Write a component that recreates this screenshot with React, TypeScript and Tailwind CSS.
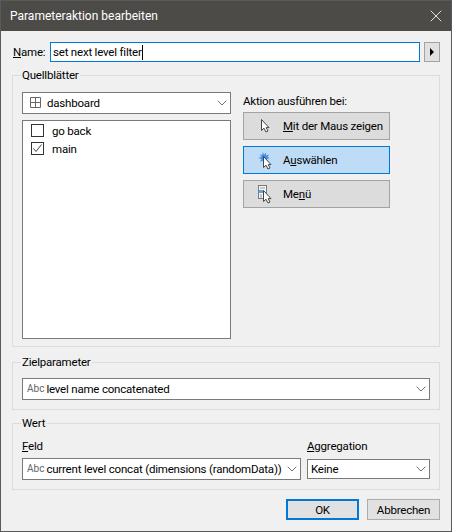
import React from 'react';
import { X, ChevronDown } from 'lucide-react';

const font = { fontFamily: 'Roboto, "Noto Sans", sans-serif' };

function Cursor({ x = 0, y = 0 }: { x?: number; y?: number }) {
  return (
    <path
      transform={`translate(${x} ${y})`}
      d="M0.5 0.5 V11.5 L3 9.2 L5 13 L7 12 L5.2 8.6 H8 Z"
      fill="#fff"
      stroke="#444"
      strokeWidth="1"
    />
  );
}

function HoverIcon() {
  return (
    <svg width="20" height="20" viewBox="0 0 20 20">
      <Cursor x={3} y={3} />
    </svg>
  );
}

function SelectIcon() {
  return (
    <svg width="20" height="20" viewBox="0 0 20 20">
      <path
        d="M5 2 L6 5 L8 2.5 L8 5.5 L11 4.5 L9.5 7 L12 8 L9 9 L10 12 L7 10.5 L5.5 13 L5 10.5 L2 12 L3.5 9 L0 8 L3.5 7 L1.5 4 L4 5.5 Z"
        fill="#3f8fe8"
      />
      <Cursor x={5} y={6} />
    </svg>
  );
}

function MenuIcon() {
  return (
    <svg width="20" height="20" viewBox="0 0 20 20">
      <rect x="0.5" y="1.5" width="8" height="13" fill="#f4f4f4" stroke="#7a7a7a" />
      <rect x="1" y="6" width="4" height="3" fill="#58a6ee" />
      <path d="M2 4 H7 M2 11 H4 M2 13 H4" stroke="#9a9a9a" />
      <Cursor x={5} y={6} />
    </svg>
  );
}

function Combo({ className, children }: { className: string; children: React.ReactNode }) {
  return (
    <div className={`flex items-center bg-white border border-[#7a7a7a] ${className}`}>
      <div className="flex-1 flex items-center min-w-0 whitespace-nowrap overflow-hidden">{children}</div>
      <ChevronDown className="w-[16px] h-[16px] text-[#555] shrink-0" strokeWidth={1.25} />
    </div>
  );
}

function Abc() {
  return <span className="text-[10px] text-[#666] ml-1 mr-[2px] tracking-normal">Abc</span>;
}

function ActionButton({
  icon,
  active,
  children,
}: {
  icon: React.ReactNode;
  active?: boolean;
  children: React.ReactNode;
}) {
  return (
    <button
      className={`h-[28px] w-[147px] flex items-center border whitespace-nowrap ${
        active ? 'bg-[#bedcf5] border-[#0078d7]' : 'bg-[#dcdcdc] border-[#a3a3a3]'
      }`}
    >
      <span className="ml-[14px] w-[25px] flex">{icon}</span>
      <span>{children}</span>
    </button>
  );
}

export default function App() {
  return (
    <div
      style={font}
      className="w-[452px] h-[532px] flex flex-col bg-[#f0f0f0] border border-[#5a5a5a] text-[11.5px] tracking-[-0.2px] leading-[16px] text-black overflow-hidden"
    >
      {/* Title bar */}
      <div className="h-[30px] shrink-0 bg-[#4d4b48] flex items-center justify-between pl-[9px] pr-[5px] text-white">
        <span className="text-[12px] tracking-normal">Parameteraktion bearbeiten</span>
        <X className="w-[20px] h-[20px]" strokeWidth={1} />
      </div>

      <div className="flex-1 flex flex-col px-[11px]">
        {/* Name */}
        <div className="flex items-center mt-[11px] h-[20px]">
          <span className="ml-[1px] w-[37px]">
            <u>N</u>ame:
          </span>
          <div className="w-[370px] h-[20px] bg-white border border-[#0078d7] flex items-center pl-[2px]">
            <span>set next level filter</span>
            <span className="w-px h-[15px] bg-black" />
          </div>
          <div className="ml-[4px] w-[16px] h-[20px] border border-[#a3a3a3] bg-[#e1e1e1] flex items-center justify-center">
            <span className="border-y-[4px] border-l-[4px] border-y-transparent border-l-black" />
          </div>
        </div>

        {/* Quellblätter */}
        <fieldset className="mt-[5px] h-[280px] border border-[#dcdcdc] px-[9px] pt-[9px]">
          <legend className="ml-[-1px] px-[1px]">Quellblätter</legend>
          <div className="flex">
            <div className="w-[209px] flex flex-col gap-[6px]">
              <Combo className="h-[22px]">
                <svg width="12" height="12" viewBox="0 0 12 12" className="ml-[7px] mr-[5px]">
                  <path d="M0.5 0.5 H10.5 V10.5 H0.5 Z M5.5 0.5 V10.5 M0.5 5.5 H10.5" fill="none" stroke="#666" />
                </svg>
                dashboard
              </Combo>
              <div className="h-[219px] bg-white border border-[#7a7a7a] pl-[8px] pt-[3px] flex flex-col gap-[5px]">
                <div className="flex items-center h-[13px]">
                  <span className="w-[13px] h-[13px] border border-[#333] bg-white" />
                  <span className="ml-[8px]">go back</span>
                </div>
                <div className="flex items-center h-[13px]">
                  <span className="w-[13px] h-[13px] border border-[#333] bg-white flex items-center justify-center">
                    <svg width="11" height="11" viewBox="0 0 11 11">
                      <path d="M1.5 5.5 L4 8.5 L9.5 1.5" fill="none" stroke="#444" />
                    </svg>
                  </span>
                  <span className="ml-[8px]">main</span>
                </div>
              </div>
            </div>
            <div className="ml-[12px] flex flex-col gap-[6px]">
              <div className="mt-[-1px] mb-[-3px] h-[18px] flex items-end">Aktion ausführen bei:</div>
              <ActionButton icon={<HoverIcon />}>
                <u>M</u>it der Maus zeigen
              </ActionButton>
              <ActionButton icon={<SelectIcon />} active>
                A<u>u</u>swählen
              </ActionButton>
              <ActionButton icon={<MenuIcon />}>
                Me<u>n</u>ü
              </ActionButton>
            </div>
          </div>
        </fieldset>

        {/* Zielparameter */}
        <fieldset className="mt-[7px] h-[56px] border border-[#dcdcdc] px-[9px] pt-[8px]">
          <legend className="ml-[-1px] px-[1px]">Zielparameter</legend>
          <Combo className="h-[22px]">
            <Abc />
            level name concatenated
          </Combo>
        </fieldset>

        {/* Wert */}
        <fieldset className="mt-[5px] h-[75px] border border-[#dcdcdc] px-[9px]">
          <legend className="ml-[-1px] px-[1px]">Wert</legend>
          <div className="flex gap-[6px] mt-[7px]">
            <div className="w-[279px] flex flex-col gap-[4px]">
              <span>
                <u>F</u>eld
              </span>
              <Combo className="h-[22px]">
                <Abc />
                current level concat (dimensions (randomData))
              </Combo>
            </div>
            <div className="w-[123px] flex flex-col gap-[5px]">
              <span>
                <u>A</u>ggregation
              </span>
              <Combo className="h-[20px] pl-[3px]">Keine</Combo>
            </div>
          </div>
        </fieldset>

        {/* Footer */}
        <div className="flex justify-end gap-[8px] mt-[9px]">
          <button className="w-[73px] h-[21px] bg-[#e1e1e1] border-2 border-[#0078d7]">OK</button>
          <button className="w-[73px] h-[21px] bg-[#e1e1e1] border border-[#adadad]">Abbrechen</button>
        </div>
      </div>
    </div>
  );
}
